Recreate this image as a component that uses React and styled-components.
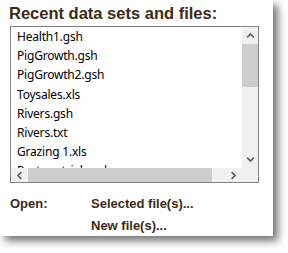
import React from "react";
import styled, { createGlobalStyle } from "styled-components";

const Global = createGlobalStyle`
  html, body { margin: 0; padding: 0; background: #ffffff; }
  body { width: 288px; height: 253px; overflow: hidden; }
`;

const Panel = styled.div`
  width: 273px;
  height: 236px;
  background: #ffffff;
  box-shadow: 5px 5px 8px rgba(0, 0, 0, 0.55);
  box-sizing: border-box;
  padding: 2px 0 0 10px;
  display: flex;
  flex-direction: column;
`;

const Title = styled.h1`
  margin: 0 0 0 -1px;
  font-family: "Liberation Sans", Arial, sans-serif;
  font-weight: bold;
  font-size: 16.5px;
  line-height: 22px;
  color: #3d2a14;
  height: 24px;
`;

const ListBox = styled.div`
  width: 249px;
  height: 157px;
  box-sizing: border-box;
  border: 1px solid #828282;
  display: grid;
  grid-template-columns: 1fr 16px;
  grid-template-rows: 1fr 14px;
  background: #ffffff;
`;

const Items = styled.ul`
  margin: 0;
  padding: 0 0 0 6px;
  list-style: none;
  overflow: hidden;
`;

const Item = styled.li`
  height: 19.2px;
  line-height: 19.2px;
  font-family: "Noto Sans", "Open Sans", sans-serif;
  font-size: 12px;
  letter-spacing: -0.2px;
  color: #000000;
  white-space: nowrap;
`;

const VScroll = styled.div`
  background: #f0f0f0;
  display: grid;
  grid-template-rows: 17px 43px 1fr 17px;
`;

const HScroll = styled.div`
  grid-column: 1 / 3;
  background: #f0f0f0;
  display: grid;
  grid-template-columns: 17px 184px 1fr 17px 16px;
`;

const Thumb = styled.div`
  background: #cdcdcd;
`;

const Arrow = styled.div`
  display: flex;
  align-items: center;
  justify-content: center;
`;

const Chevron = ({ dir }) => {
  const rot = { up: 0, down: 180, left: 270, right: 90 }[dir];
  return (
    <svg width="9" height="9" viewBox="0 0 9 9" style={{ transform: `rotate(${rot}deg)` }}>
      <path d="M1.2 6.3 L4.5 3 L7.8 6.3" fill="none" stroke="#606060" strokeWidth="1.7" />
    </svg>
  );
};

const Actions = styled.div`
  margin-top: 12px;
  display: grid;
  grid-template-columns: 81px auto;
  row-gap: 4px;
  font-family: "Liberation Sans", Arial, sans-serif;
  font-weight: bold;
  font-size: 13px;
  line-height: 18px;
  color: #3d2a14;
`;

const Label = styled.span`
  grid-column: 1;
  grid-row: 1;
`;

const Link = styled.span`
  grid-column: 2;
  grid-row: ${(p) => p.$row};
  cursor: pointer;
`;

const files = [
  "Health1.gsh",
  "PigGrowth.gsh",
  "PigGrowth2.gsh",
  "Toysales.xls",
  "Rivers.gsh",
  "Rivers.txt",
  "Grazing 1.xls",
  "Pasture trials.gsh",
];

export default function App() {
  return (
    <>
      <Global />
      <Panel>
        <Title>Recent data sets and files:</Title>
        <ListBox>
          <Items>
            {files.map((f) => (
              <Item key={f}>{f}</Item>
            ))}
          </Items>
          <VScroll>
            <Arrow><Chevron dir="up" /></Arrow>
            <Thumb />
            <div />
            <Arrow><Chevron dir="down" /></Arrow>
          </VScroll>
          <HScroll>
            <Arrow><Chevron dir="left" /></Arrow>
            <Thumb />
            <div />
            <Arrow><Chevron dir="right" /></Arrow>
            <div />
          </HScroll>
        </ListBox>
        <Actions>
          <Label>Open:</Label>
          <Link $row={1}>Selected file(s)...</Link>
          <Link $row={2}>New file(s)...</Link>
        </Actions>
      </Panel>
    </>
  );
}
